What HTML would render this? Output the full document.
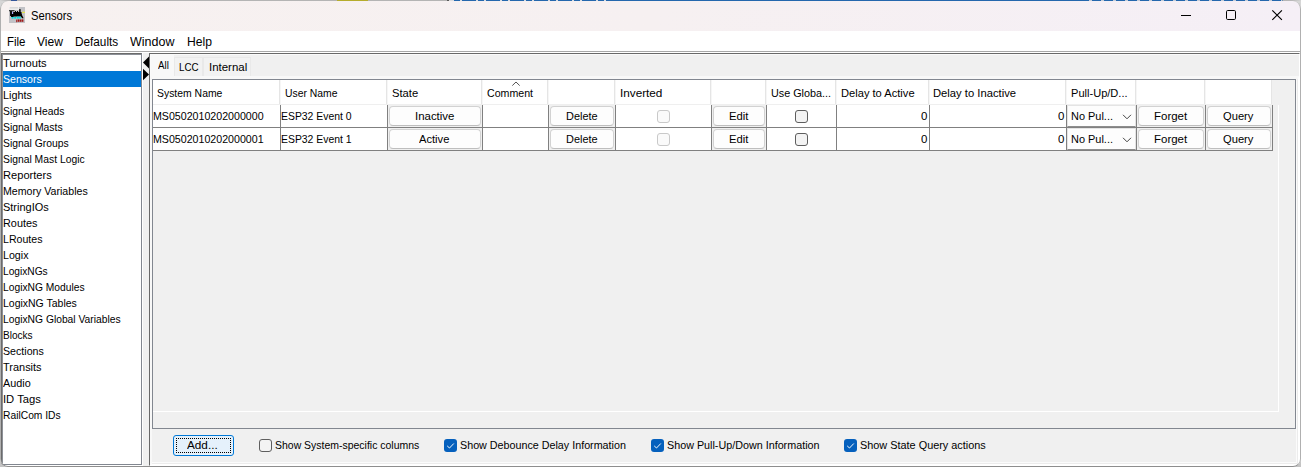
<!DOCTYPE html>
<html><head><meta charset="utf-8"><title>Sensors</title>
<style>
html,body{margin:0;padding:0}
body{width:1301px;height:467px;overflow:hidden;position:relative;background:#d0d0d0;font-family:"Liberation Sans",sans-serif;font-size:11px;color:#000}
div,span,svg{position:absolute;box-sizing:border-box}
.t{white-space:nowrap;line-height:16px;height:16px;transform-origin:0 50%;display:block}
#strip{left:0;top:0;width:1301px;height:1px;background:linear-gradient(to right,#d4d4d4 0,#bcbcbc 6px,#b4b4b4 11px,#34579a 11px,#34579a 17px,#b4b4b4 17px,#b4b4b4 337px,#b5ac2c 337px,#b5ac2c 368px,#b4b4b4 368px,#b4b4b4 447px,#5a5a5a 447px,#5a5a5a 449px,#dcdcdc 449px,#dcdcdc 455px,#2467ad 455px,#2467ad 1282px,#b4b4b4 1283px,#b8b8b8 1292px,#d4d4d4 1301px)}
#clip{left:0;top:1px;width:1301px;height:466px;background:#fff}
#pg{left:0;top:-1px;width:1301px;height:467px}
#frame{left:0;top:1px;width:1301px;height:466px;border:1px solid #b0b0b0;border-bottom-color:#8e8e8e;border-top:0;border-radius:8px}
#title{left:1px;top:1px;width:1299px;height:30px;border-radius:7px 7px 0 0;background:linear-gradient(to right,#f7f1f0 0,#f6f0f1 50%,#f5eff6 100%)}
#mline{left:1px;top:51px;width:1299px;height:1px;background:#a8a8a8}
/* list: x=1..141, y=53..464 */
#list{left:1px;top:53px;width:141px;height:412px;background:#fff;border:1px solid #828790;border-left:1px solid #6b6b6b;border-top:1px solid #6b6b6b}
#list2{left:2px;top:54px;width:139px;height:410px;border-left:1px solid #8c9097;border-top:1px solid #8c9097}
#sel{left:3px;top:71px;width:138px;height:16px;background:#0078d7}
#split{left:143px;top:53px;width:6px;height:413px;background:#f0f0f0}
/* right panel x=149..1299, y=53..465 */
#rp{left:149px;top:53px;width:1151px;height:413px;background:#f0f0f0;border-left:1px solid #696969;border-top:1px solid #696969;border-right:1px solid #fff;border-bottom:1px solid #fff}
#rpi{left:150px;top:54px;width:1149px;height:411px;border-left:1px solid #fafafa;border-top:1px solid #fafafa}
.tab{background:#f2f2f2;border:1px solid #e9e9e9;border-bottom:0}
#content{left:150px;top:76px;width:1149px;height:389px;border:2px solid #f8f8f8;border-top-width:3px;border-right:1px solid #fff;border-bottom:1px solid #fff;background:#f0f0f0}
#content2{left:152px;top:79px;width:1146px;height:385px;border-right:1px solid #ececec;border-bottom:1px solid #ececec}
#content3{left:152px;top:79px;width:1145px;height:384px;border-right:1px solid #fbfbfb;border-bottom:1px solid #fbfbfb}
#sp{left:152px;top:79px;width:1144px;height:350px;border:1px solid #828790;background:#f0f0f0}
#hdr{left:153px;top:80px;width:1118px;height:24px;background:#fff}
#hline{left:153px;top:104px;width:1119px;height:1px;background:#efefef}
#tbl{left:153px;top:105px;width:1120px;height:46px;background:#fff}
.hs{background:#e5e5e5}
.gv{background:#808080}
.gh{background:#808080}
.bc{background:#f0f0f0;height:22px}
.btn{background:#fdfdfd;border:1px solid #d2d2d2;border-bottom-color:#bebebe;border-radius:4px;height:20px}
.cb{width:13px;height:13px;border:1px solid #5e5e5e;border-radius:3px;background:#f3f3f3}
.cbd{width:13px;height:13px;border:1px solid #c9c9c9;border-radius:3px;background:#fafafa}
.cbc{width:13px;height:13px;border-radius:3px;background:#0560bd}
.combo{background:#fdfdfd;border:1px solid #e4e4e4;border-bottom:1px solid #8d8d8d;height:22px}
#wv{left:1278px;top:105px;width:1px;height:307px;background:#fff}
#wh{left:153px;top:411px;width:1126px;height:1px;background:#fff}
#add{left:173px;top:435px;width:61px;height:21px;border:1px solid #0078d7;border-radius:3px;background:#e5f1fb}
#addf{left:2px;top:2px;width:55px;height:15px;border:1px dotted #000}
.cm{width:8px;height:8px}
#sg1{left:452px;top:0;width:154px;height:1px;background:repeating-linear-gradient(to right,#d6dbe2 0,#d6dbe2 2px,#2467ad 2px,#2467ad 8px,#d6dbe2 8px,#d6dbe2 10px,#2467ad 10px,#2467ad 24px)}
#sg2{left:1080px;top:0;width:202px;height:1px;background:repeating-linear-gradient(to right,#2467ad 0,#2467ad 9px,#c4ccd8 9px,#c4ccd8 12px)}

</style></head>
<body>
<div id="strip"></div>
<div id="sg1"></div><div id="sg2"></div>
<div id="clip"><div id="pg">
<div id="title"></div>
<svg id="icon" style="left:9px;top:7px" width="16" height="16" viewBox="0 0 16 16">
 <defs><filter id="ib" x="-5%" y="-5%" width="110%" height="110%"><feGaussianBlur stdDeviation="0.38"/></filter></defs>
 <rect width="16" height="16" fill="#c2c2c6"/>
 <g>
 <rect x="-1" y="-1" width="11" height="4" fill="#ececec"/>
 <rect x="1" y="0.6" width="8" height="0.6" fill="#bdbdbd"/>
 <rect x="0" y="3" width="5.5" height="1.3" fill="#3a3a3a"/>
 <rect x="1" y="4" width="2" height="5" fill="#111"/>
 <rect x="3" y="5" width="1.2" height="2" fill="#b0b0ff"/>
 <rect x="4.2" y="5" width="8.3" height="4.3" fill="#000"/>
 <rect x="2" y="7" width="10.5" height="2.3" fill="#000"/>
 <rect x="2" y="9" width="2.5" height="1" fill="#000"/>
 <rect x="6" y="4" width="1" height="1.2" fill="#000"/>
 <rect x="8" y="4" width="1" height="1.2" fill="#000"/>
 <rect x="10" y="2.2" width="1.8" height="3" fill="#222"/>
 <rect x="13" y="4.8" width="3.5" height="1" fill="#eaea30"/>
 <polygon points="12,6 14.6,11.2 13,11.2 12,9.5" fill="#000"/>
 <rect x="2.6" y="10" width="2" height="1.6" fill="#00e0e0"/>
 <rect x="5.2" y="10" width="2" height="1.6" fill="#00e0e0"/>
 <rect x="7.8" y="9.6" width="2" height="2" fill="#00e0e0"/>
 <rect x="10.2" y="9.6" width="1.6" height="2" fill="#00e0e0"/>
 <rect x="7.2" y="12.6" width="1" height="2.6" fill="#a01818"/>
 <rect x="8.6" y="12.4" width="2" height="2.4" fill="#a01818"/>
 <rect x="11" y="12.4" width="1.6" height="2.4" fill="#a01818"/>
 <rect x="13" y="12.4" width="1.4" height="2.4" fill="#a01818"/>
 </g>
</svg>
<svg style="left:1180px;top:10px" width="12" height="12" viewBox="0 0 12 12"><path d="M1 5.5h10" stroke="#000" stroke-width="1" fill="none"/></svg>
<svg style="left:1225px;top:9px" width="12" height="12" viewBox="0 0 12 12"><rect x="1.5" y="1.5" width="9" height="9" rx="1.2" stroke="#000" stroke-width="1" fill="none"/></svg>
<svg style="left:1271px;top:9px" width="12" height="12" viewBox="0 0 12 12"><path d="M1.3 1.3l9.6 9.6M10.9 1.3l-9.6 9.6" stroke="#000" stroke-width="1.15" fill="none"/></svg>
<div id="mline"></div>
<div id="list"></div><div id="list2"></div>
<div id="sel"></div>
<div id="split"></div>
<svg style="left:143px;top:56px" width="7" height="26" viewBox="0 0 7 26"><polygon points="0,6.5 6,0.5 6,12.5" fill="#000"/><polygon points="6,18.5 0,12.7 0,24.3" fill="#000"/></svg>
<div id="rp"></div><div id="rpi"></div>
<div class="tab" style="left:151px;top:55px;width:23px;height:21px;background:#f8f8f8;border-color:#f8f8f8"></div>
<div class="tab" style="left:174px;top:57px;width:29px;height:19px"></div>
<div class="tab" style="left:203px;top:57px;width:48px;height:19px"></div>
<div id="content"></div><div id="content2"></div><div id="content3"></div>
<div id="sp"></div>
<div id="hdr"></div>
<div id="hline"></div>
<div id="tbl"></div>
<div id="wv"></div><div id="wh"></div>
<div id="add"><div id="addf"></div></div>

<div class="hs" style="left:279px;top:80px;width:1px;height:24px;"></div>
<div class="hs" style="left:280px;top:80px;width:1px;height:24px;background:#f6f6f6"></div>
<div class="hs" style="left:386px;top:80px;width:1px;height:24px;"></div>
<div class="hs" style="left:387px;top:80px;width:1px;height:24px;background:#f6f6f6"></div>
<div class="hs" style="left:481px;top:80px;width:1px;height:24px;"></div>
<div class="hs" style="left:482px;top:80px;width:1px;height:24px;background:#f6f6f6"></div>
<div class="hs" style="left:547px;top:80px;width:1px;height:24px;"></div>
<div class="hs" style="left:548px;top:80px;width:1px;height:24px;background:#f6f6f6"></div>
<div class="hs" style="left:614px;top:80px;width:1px;height:24px;"></div>
<div class="hs" style="left:615px;top:80px;width:1px;height:24px;background:#f6f6f6"></div>
<div class="hs" style="left:710px;top:80px;width:1px;height:24px;"></div>
<div class="hs" style="left:711px;top:80px;width:1px;height:24px;background:#f6f6f6"></div>
<div class="hs" style="left:765px;top:80px;width:1px;height:24px;"></div>
<div class="hs" style="left:766px;top:80px;width:1px;height:24px;background:#f6f6f6"></div>
<div class="hs" style="left:835px;top:80px;width:1px;height:24px;"></div>
<div class="hs" style="left:836px;top:80px;width:1px;height:24px;background:#f6f6f6"></div>
<div class="hs" style="left:928px;top:80px;width:1px;height:24px;"></div>
<div class="hs" style="left:929px;top:80px;width:1px;height:24px;background:#f6f6f6"></div>
<div class="hs" style="left:1065px;top:80px;width:1px;height:24px;"></div>
<div class="hs" style="left:1066px;top:80px;width:1px;height:24px;background:#f6f6f6"></div>
<div class="hs" style="left:1135px;top:80px;width:1px;height:24px;"></div>
<div class="hs" style="left:1136px;top:80px;width:1px;height:24px;background:#f6f6f6"></div>
<div class="hs" style="left:1204px;top:80px;width:1px;height:24px;"></div>
<div class="hs" style="left:1205px;top:80px;width:1px;height:24px;background:#f6f6f6"></div>
<div class="hs" style="left:1271px;top:80px;width:1px;height:24px;"></div>
<div class="bc" style="left:388px;top:105px;width:94px;height:22px;"></div>
<div class="btn" style="left:389px;top:106px;width:92px;height:20px;"></div>
<div class="bc" style="left:549px;top:105px;width:66px;height:22px;"></div>
<div class="btn" style="left:550px;top:106px;width:64px;height:20px;"></div>
<div class="bc" style="left:712px;top:105px;width:54px;height:22px;"></div>
<div class="btn" style="left:713px;top:106px;width:52px;height:20px;"></div>
<div class="bc" style="left:1137px;top:105px;width:68px;height:22px;"></div>
<div class="btn" style="left:1138px;top:106px;width:66px;height:20px;"></div>
<div class="bc" style="left:1206px;top:105px;width:66px;height:22px;"></div>
<div class="btn" style="left:1207px;top:106px;width:64px;height:20px;"></div>
<div class="combo" style="left:1067px;top:105px;width:69px;height:22px;"></div>
<svg style="left:1122px;top:114px" width="10" height="6" viewBox="0 0 10 6"><path d="M1 0.8l4 4 4-4" stroke="#444" stroke-width="1" fill="none"/></svg>
<div class="cbd" style="left:657px;top:110px;width:13px;height:13px;"></div>
<div class="cb" style="left:795px;top:110px;width:13px;height:13px;"></div>
<div class="bc" style="left:388px;top:128px;width:94px;height:22px;"></div>
<div class="btn" style="left:389px;top:129px;width:92px;height:20px;"></div>
<div class="bc" style="left:549px;top:128px;width:66px;height:22px;"></div>
<div class="btn" style="left:550px;top:129px;width:64px;height:20px;"></div>
<div class="bc" style="left:712px;top:128px;width:54px;height:22px;"></div>
<div class="btn" style="left:713px;top:129px;width:52px;height:20px;"></div>
<div class="bc" style="left:1137px;top:128px;width:68px;height:22px;"></div>
<div class="btn" style="left:1138px;top:129px;width:66px;height:20px;"></div>
<div class="bc" style="left:1206px;top:128px;width:66px;height:22px;"></div>
<div class="btn" style="left:1207px;top:129px;width:64px;height:20px;"></div>
<div class="combo" style="left:1067px;top:128px;width:69px;height:22px;"></div>
<svg style="left:1122px;top:137px" width="10" height="6" viewBox="0 0 10 6"><path d="M1 0.8l4 4 4-4" stroke="#444" stroke-width="1" fill="none"/></svg>
<div class="cbd" style="left:657px;top:133px;width:13px;height:13px;"></div>
<div class="cb" style="left:795px;top:133px;width:13px;height:13px;"></div>
<div class="gv" style="left:280px;top:105px;width:1px;height:46px;"></div>
<div class="gv" style="left:387px;top:105px;width:1px;height:46px;"></div>
<div class="gv" style="left:482px;top:105px;width:1px;height:46px;"></div>
<div class="gv" style="left:548px;top:105px;width:1px;height:46px;"></div>
<div class="gv" style="left:615px;top:105px;width:1px;height:46px;"></div>
<div class="gv" style="left:711px;top:105px;width:1px;height:46px;"></div>
<div class="gv" style="left:766px;top:105px;width:1px;height:46px;"></div>
<div class="gv" style="left:836px;top:105px;width:1px;height:46px;"></div>
<div class="gv" style="left:929px;top:105px;width:1px;height:46px;"></div>
<div class="gv" style="left:1066px;top:105px;width:1px;height:46px;"></div>
<div class="gv" style="left:1136px;top:105px;width:1px;height:46px;"></div>
<div class="gv" style="left:1205px;top:105px;width:1px;height:46px;"></div>
<div class="gv" style="left:1272px;top:105px;width:1px;height:46px;"></div>
<div class="gh" style="left:153px;top:127px;width:1120px;height:1px;"></div>
<div class="gh" style="left:153px;top:150px;width:1120px;height:1px;"></div>
<svg style="left:511px;top:81px" width="10" height="6" viewBox="0 0 10 6"><path d="M1.3 4.6l3.7-3.6 3.7 3.6" stroke="#555" stroke-width="1" fill="none"/></svg>
<div class="cb" style="left:259px;top:439px;width:13px;height:13px;"></div>
<div class="cbc" style="left:444px;top:439px;width:13px;height:13px;"></div>
<svg style="left:444px;top:439px" width="13" height="13" viewBox="0 0 13 13"><path d="M3.2 6.9l2.3 2.1 4.3-4.5" stroke="#fff" stroke-width="0.95" fill="none"/></svg>
<div class="cbc" style="left:651px;top:439px;width:13px;height:13px;"></div>
<svg style="left:651px;top:439px" width="13" height="13" viewBox="0 0 13 13"><path d="M3.2 6.9l2.3 2.1 4.3-4.5" stroke="#fff" stroke-width="0.95" fill="none"/></svg>
<div class="cbc" style="left:844px;top:439px;width:13px;height:13px;"></div>
<svg style="left:844px;top:439px" width="13" height="13" viewBox="0 0 13 13"><path d="M3.2 6.9l2.3 2.1 4.3-4.5" stroke="#fff" stroke-width="0.95" fill="none"/></svg>
<span class="t" style="left:30.90px;top:7.84px;font-size:12px;color:#000;transform:scaleX(0.9334)">Sensors</span>
<span class="t" style="left:6.90px;top:33.84px;font-size:12px;color:#000;transform:scaleX(0.9564)">File</span>
<span class="t" style="left:37.10px;top:33.84px;font-size:12px;color:#000;transform:scaleX(1.0079)">View</span>
<span class="t" style="left:74.70px;top:33.84px;font-size:12px;color:#000;transform:scaleX(0.9811)">Defaults</span>
<span class="t" style="left:130.00px;top:33.84px;font-size:12px;color:#000;transform:scaleX(1.0401)">Window</span>
<span class="t" style="left:186.70px;top:33.84px;font-size:12px;color:#000;transform:scaleX(1.0127)">Help</span>
<span class="t" style="left:3.00px;top:55.02px;font-size:11.5px;color:#000;transform:scaleX(0.9696)">Turnouts</span>
<span class="t" style="left:3.00px;top:71.02px;font-size:11.5px;color:#fff;transform:scaleX(0.9197)">Sensors</span>
<span class="t" style="left:3.00px;top:87.02px;font-size:11.5px;color:#000;transform:scaleX(0.9418)">Lights</span>
<span class="t" style="left:3.00px;top:103.02px;font-size:11.5px;color:#000;transform:scaleX(0.8976)">Signal Heads</span>
<span class="t" style="left:3.00px;top:119.02px;font-size:11.5px;color:#000;transform:scaleX(0.9067)">Signal Masts</span>
<span class="t" style="left:3.00px;top:135.02px;font-size:11.5px;color:#000;transform:scaleX(0.9002)">Signal Groups</span>
<span class="t" style="left:3.00px;top:151.02px;font-size:11.5px;color:#000;transform:scaleX(0.8989)">Signal Mast Logic</span>
<span class="t" style="left:3.00px;top:167.02px;font-size:11.5px;color:#000;transform:scaleX(0.9663)">Reporters</span>
<span class="t" style="left:3.00px;top:183.02px;font-size:11.5px;color:#000;transform:scaleX(0.9224)">Memory Variables</span>
<span class="t" style="left:3.00px;top:199.02px;font-size:11.5px;color:#000;transform:scaleX(0.9533)">StringIOs</span>
<span class="t" style="left:3.00px;top:215.02px;font-size:11.5px;color:#000;transform:scaleX(0.9441)">Routes</span>
<span class="t" style="left:3.00px;top:231.02px;font-size:11.5px;color:#000;transform:scaleX(0.9220)">LRoutes</span>
<span class="t" style="left:3.00px;top:247.02px;font-size:11.5px;color:#000;transform:scaleX(0.9273)">Logix</span>
<span class="t" style="left:3.00px;top:263.02px;font-size:11.5px;color:#000;transform:scaleX(0.8851)">LogixNGs</span>
<span class="t" style="left:3.00px;top:279.02px;font-size:11.5px;color:#000;transform:scaleX(0.8927)">LogixNG Modules</span>
<span class="t" style="left:3.00px;top:295.02px;font-size:11.5px;color:#000;transform:scaleX(0.9113)">LogixNG Tables</span>
<span class="t" style="left:3.00px;top:311.02px;font-size:11.5px;color:#000;transform:scaleX(0.8945)">LogixNG Global Variables</span>
<span class="t" style="left:3.00px;top:327.02px;font-size:11.5px;color:#000;transform:scaleX(0.8738)">Blocks</span>
<span class="t" style="left:3.00px;top:343.02px;font-size:11.5px;color:#000;transform:scaleX(0.9250)">Sections</span>
<span class="t" style="left:3.00px;top:359.02px;font-size:11.5px;color:#000;transform:scaleX(0.9535)">Transits</span>
<span class="t" style="left:3.00px;top:375.02px;font-size:11.5px;color:#000;transform:scaleX(0.9415)">Audio</span>
<span class="t" style="left:3.00px;top:391.02px;font-size:11.5px;color:#000;transform:scaleX(0.9773)">ID Tags</span>
<span class="t" style="left:3.00px;top:407.02px;font-size:11.5px;color:#000;transform:scaleX(0.8939)">RailCom IDs</span>
<span class="t" style="left:158.00px;top:57.02px;font-size:11.5px;color:#000;transform:scaleX(0.8450)">All</span>
<span class="t" style="left:178.90px;top:59.02px;font-size:11.5px;color:#000;transform:scaleX(0.8516)">LCC</span>
<span class="t" style="left:209.40px;top:59.02px;font-size:11.5px;color:#000;transform:scaleX(0.9958)">Internal</span>
<span class="t" style="left:157.00px;top:85.02px;font-size:11.5px;color:#000;transform:scaleX(0.9056)">System Name</span>
<span class="t" style="left:285.00px;top:85.02px;font-size:11.5px;color:#000;transform:scaleX(0.9010)">User Name</span>
<span class="t" style="left:391.80px;top:85.02px;font-size:11.5px;color:#000;transform:scaleX(0.9755)">State</span>
<span class="t" style="left:487.00px;top:85.02px;font-size:11.5px;color:#000;transform:scaleX(0.9226)">Comment</span>
<span class="t" style="left:620.00px;top:85.02px;font-size:11.5px;color:#000;transform:scaleX(1.0202)">Inverted</span>
<span class="t" style="left:771.00px;top:85.02px;font-size:11.5px;color:#000;transform:scaleX(0.9386)">Use Globa...</span>
<span class="t" style="left:840.80px;top:85.02px;font-size:11.5px;color:#000;transform:scaleX(0.9674)">Delay to Active</span>
<span class="t" style="left:933.40px;top:85.02px;font-size:11.5px;color:#000;transform:scaleX(0.9763)">Delay to Inactive</span>
<span class="t" style="left:1070.80px;top:85.02px;font-size:11.5px;color:#000;transform:scaleX(0.9626)">Pull-Up/D...</span>
<span class="t" style="left:152.80px;top:108.02px;font-size:11.5px;color:#000;transform:scaleX(0.9248)">MS0502010202000000</span>
<span class="t" style="left:280.80px;top:108.02px;font-size:11.5px;color:#000;transform:scaleX(0.9051)">ESP32 Event 0</span>
<span class="t" style="left:415.00px;top:108.02px;font-size:11.5px;color:#000;transform:scaleX(0.9939)">Inactive</span>
<span class="t" style="left:565.80px;top:108.02px;font-size:11.5px;color:#000;transform:scaleX(0.9504)">Delete</span>
<span class="t" style="left:729.00px;top:108.02px;font-size:11.5px;color:#000;transform:scaleX(0.9784)">Edit</span>
<span class="t" style="left:921.40px;top:108.02px;font-size:11.5px;color:#000;transform:scaleX(0.9990)">0</span>
<span class="t" style="left:1058.40px;top:108.02px;font-size:11.5px;color:#000;transform:scaleX(0.9990)">0</span>
<span class="t" style="left:1070.80px;top:108.02px;font-size:11.5px;color:#000;transform:scaleX(0.9522)">No Pul...</span>
<span class="t" style="left:1153.80px;top:108.02px;font-size:11.5px;color:#000;transform:scaleX(0.9985)">Forget</span>
<span class="t" style="left:1223.00px;top:108.02px;font-size:11.5px;color:#000;transform:scaleX(0.9704)">Query</span>
<span class="t" style="left:152.80px;top:131.02px;font-size:11.5px;color:#000;transform:scaleX(0.9248)">MS0502010202000001</span>
<span class="t" style="left:280.80px;top:131.02px;font-size:11.5px;color:#000;transform:scaleX(0.9051)">ESP32 Event 1</span>
<span class="t" style="left:419.40px;top:131.02px;font-size:11.5px;color:#000;transform:scaleX(0.9704)">Active</span>
<span class="t" style="left:565.80px;top:131.02px;font-size:11.5px;color:#000;transform:scaleX(0.9504)">Delete</span>
<span class="t" style="left:729.00px;top:131.02px;font-size:11.5px;color:#000;transform:scaleX(0.9784)">Edit</span>
<span class="t" style="left:921.40px;top:131.02px;font-size:11.5px;color:#000;transform:scaleX(0.9990)">0</span>
<span class="t" style="left:1058.40px;top:131.02px;font-size:11.5px;color:#000;transform:scaleX(0.9990)">0</span>
<span class="t" style="left:1070.80px;top:131.02px;font-size:11.5px;color:#000;transform:scaleX(0.9522)">No Pul...</span>
<span class="t" style="left:1153.80px;top:131.02px;font-size:11.5px;color:#000;transform:scaleX(0.9985)">Forget</span>
<span class="t" style="left:1223.00px;top:131.02px;font-size:11.5px;color:#000;transform:scaleX(0.9704)">Query</span>
<span class="t" style="left:187.40px;top:437.02px;font-size:11.5px;color:#000;transform:scaleX(1.0212)">Add...</span>
<span class="t" style="left:275.10px;top:437.02px;font-size:11.5px;color:#000;transform:scaleX(0.9104)">Show System-specific columns</span>
<span class="t" style="left:460.40px;top:437.02px;font-size:11.5px;color:#000;transform:scaleX(0.9335)">Show Debounce Delay Information</span>
<span class="t" style="left:667.10px;top:437.02px;font-size:11.5px;color:#000;transform:scaleX(0.9356)">Show Pull-Up/Down Information</span>
<span class="t" style="left:859.90px;top:437.02px;font-size:11.5px;color:#000;transform:scaleX(0.9461)">Show State Query actions</span>
</div></div>
<svg class="cm" style="left:0;top:1px" viewBox="0 0 8 8"><path d="M0 0H8A8 8 0 0 0 0 8Z" fill="#d6d6d6"/></svg>
<svg class="cm" style="left:1293px;top:1px" viewBox="0 0 8 8"><path d="M8 0H0A8 8 0 0 1 8 8Z" fill="#d6d6d6"/></svg>
<svg class="cm" style="left:0;top:459px" viewBox="0 0 8 8"><path d="M0 8H8A8 8 0 0 1 0 0Z" fill="#c4c4c4"/></svg>
<svg class="cm" style="left:1293px;top:459px" viewBox="0 0 8 8"><path d="M8 8H0A8 8 0 0 0 8 0Z" fill="#c4c4c4"/></svg>
<div id="frame"></div>
</body></html>
